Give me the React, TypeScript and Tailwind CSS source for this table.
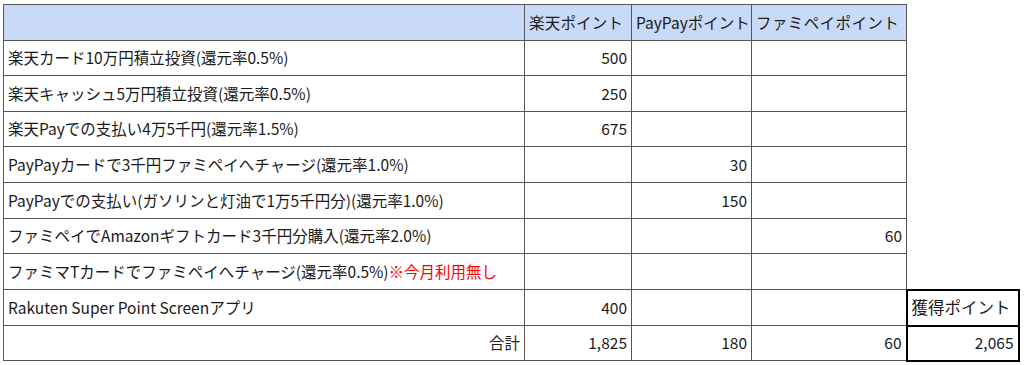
const rows: { label: React.ReactNode; r?: string; p?: string; f?: string; h: number }[] = [
  { label: "楽天カード10万円積立投資(還元率0.5%)", r: "500", h: 35 },
  { label: "楽天キャッシュ5万円積立投資(還元率0.5%)", r: "250", h: 36 },
  { label: "楽天Payでの支払い4万5千円(還元率1.5%)", r: "675", h: 35 },
  { label: "PayPayカードで3千円ファミペイへチャージ(還元率1.0%)", p: "30", h: 36 },
  { label: "PayPayでの支払い(ガソリンと灯油で1万5千円分)(還元率1.0%)", p: "150", h: 36 },
  { label: "ファミペイでAmazonギフトカード3千円分購入(還元率2.0%)", f: "60", h: 35 },
  {
    label: (
      <>
        ファミマTカードでファミペイへチャージ(還元率0.5%)
        <span className="text-[#ff0000]">※今月利用無し</span>
      </>
    ),
    h: 36,
  },
];

const cell = "border border-[#555] px-[4px] whitespace-nowrap overflow-hidden";

export default function App() {
  return (
    <div
      className="w-[1024px] h-[365px] bg-white pt-[4px] pl-[3px] text-[15.5px] text-[#1a1a1a]"
      style={{ fontFamily: '"Noto Sans CJK JP", "Noto Sans", sans-serif' }}
    >
      <table className="w-[1015px] table-fixed border-collapse leading-none">
        <colgroup>
          <col className="w-[521px]" />
          <col className="w-[107px]" />
          <col className="w-[120px]" />
          <col className="w-[155px]" />
          <col className="w-[112px]" />
        </colgroup>
        <tbody>
          <tr className="h-[36px] bg-[#c9daf8]">
            <td className={cell}></td>
            <td className={`${cell} px-[3px] tracking-[0.2px]`}>楽天ポイント</td>
            <td className={`${cell} px-[3px]`}>PayPayポイント</td>
            <td className={`${cell} tracking-[0.4px]`}>ファミペイポイント</td>
            <td className="bg-white"></td>
          </tr>
          {rows.map((row, i) => (
            <tr key={i} style={{ height: row.h }}>
              <td className={cell}>{row.label}</td>
              <td className={`${cell} text-right`}>{row.r}</td>
              <td className={`${cell} text-right`}>{row.p}</td>
              <td className={`${cell} text-right`}>{row.f}</td>
              <td></td>
            </tr>
          ))}
          <tr className="h-[36px]">
            <td className={cell}>Rakuten Super Point Screenアプリ</td>
            <td className={`${cell} text-right`}>400</td>
            <td className={cell}></td>
            <td className={cell}></td>
            <td className="border-2 border-black px-[4px] whitespace-nowrap text-[16.5px]">獲得ポイント</td>
          </tr>
          <tr className="h-[35px]">
            <td className={`${cell} text-right`}>合計</td>
            <td className={`${cell} text-right`}>1,825</td>
            <td className={`${cell} text-right`}>180</td>
            <td className={`${cell} text-right`}>60</td>
            <td className="border-2 border-black px-[4px] text-right">2,065</td>
          </tr>
        </tbody>
      </table>
    </div>
  );
}
